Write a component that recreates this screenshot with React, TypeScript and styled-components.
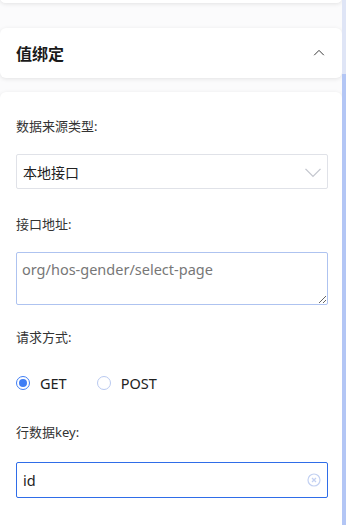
import { FC } from 'react'
import styled, { createGlobalStyle } from 'styled-components'

const GlobalStyle = createGlobalStyle`
  html, body {
    margin: 0;
    padding: 0;
    background: #fbfbfc;
    font-family: 'Noto Sans', 'Noto Sans CJK SC', sans-serif;
    overflow: hidden;
  }
`

const Page = styled.div`
  position: relative;
  display: flex;
  width: 346px;
  height: 525px;
  overflow: hidden;
`

const Panel = styled.div`
  flex: 1;
  display: flex;
  flex-direction: column;
  gap: 14px;
  margin-top: -8px;
  padding-right: 4px;
`

const Card = styled.div`
  background: #fff;
  border-radius: 6px;
  box-shadow: 0 1px 4px rgba(0, 0, 0, 0.1);
`

const TopStub = styled(Card)`
  height: 11px;
  margin-bottom: 11px;
`

const Header = styled(Card)`
  height: 50px;
  display: flex;
  align-items: center;
  justify-content: space-between;
  padding: 0 16px;
`

const Title = styled.h3`
  margin: 0;
  font-size: 16px;
  font-weight: 700;
  color: #1a1a1a;
`

const Form = styled(Card)`
  flex: 1;
  padding: 24px 14px 0 16px;
  border-radius: 6px 6px 0 0;
`

const Field = styled.div<{ $after?: number }>`
  margin-bottom: ${(p) => p.$after ?? 25}px;
`

const Label = styled.div<{ $below?: number }>`
  font-size: 13px;
  color: #333;
  line-height: 20px;
  margin-bottom: ${(p) => p.$below ?? 18}px;
`

const Select = styled.div`
  height: 35px;
  box-sizing: border-box;
  border: 1px solid #e0e2e8;
  border-radius: 2px;
  display: flex;
  align-items: center;
  justify-content: space-between;
  padding: 0 4px 0 6px;
  font-size: 14px;
  color: #222;
`

const TextArea = styled.textarea`
  display: block;
  width: 100%;
  height: 53px;
  box-sizing: border-box;
  border: 1px solid #aec3f0;
  border-radius: 2px;
  padding: 6px 5px;
  font-family: 'Noto Sans', 'Noto Sans CJK SC', sans-serif;
  font-size: 14.5px;
  line-height: 20px;
  color: #777;
  outline: none;
  resize: vertical;
`

const RadioGroup = styled.div`
  display: flex;
  align-items: center;
  gap: 30px;
  height: 20px;
  margin-top: 26px;
  margin-bottom: 29px;
`

const RadioItem = styled.label`
  display: flex;
  align-items: center;
  gap: 10px;
  font-size: 14.5px;
  color: #222;
`

const RadioDot = styled.span<{ checked?: boolean }>`
  width: 14px;
  height: 14px;
  box-sizing: border-box;
  border-radius: 50%;
  border: 1px solid ${(p) => (p.checked ? '#3f7ef5' : '#b9c9f0')};
  display: flex;
  align-items: center;
  justify-content: center;
  &::after {
    content: '';
    width: 8px;
    height: 8px;
    border-radius: 50%;
    background: ${(p) => (p.checked ? '#3f7ef5' : 'transparent')};
  }
`

const InputBox = styled.div`
  height: 36px;
  box-sizing: border-box;
  border: 1px solid #2f6de8;
  border-radius: 2px;
  display: flex;
  align-items: center;
  justify-content: space-between;
  padding: 0 6px 0 6px;
  font-size: 14.5px;
  color: #222;
`

const ScrollTrack = styled.div`
  position: absolute;
  right: 0;
  top: 0;
  bottom: 0;
  width: 4px;
  background: #dfe5f6;
`

const ScrollThumb = styled.div`
  position: absolute;
  right: 0;
  top: 74px;
  bottom: 0;
  width: 4px;
  background: #b3c6f5;
`

const Chevron: FC<{ up?: boolean; color: string; size: number }> = ({ up, color, size }) => (
  <svg width={size} height={size} viewBox="0 0 16 16" fill="none">
    <path
      d={up ? 'M2.5 10.5 L8 5 L13.5 10.5' : 'M2 5.5 L8 11.5 L14 5.5'}
      stroke={color}
      strokeWidth="1.1"
    />
  </svg>
)

const ClearIcon = () => (
  <svg width="14" height="14" viewBox="0 0 14 14" fill="none">
    <circle cx="7" cy="7" r="6" stroke="#c3d1f2" strokeWidth="1.2" />
    <path d="M5 5 L9 9 M9 5 L5 9" stroke="#c3d1f2" strokeWidth="1.3" />
  </svg>
)

const App: FC = () => (
  <>
    <GlobalStyle />
    <Page>
      <Panel>
        <TopStub />
        <Header>
          <Title>值绑定</Title>
          <Chevron up color="#333" size={14} />
        </Header>
        <Form>
          <Field>
            <Label>数据来源类型:</Label>
            <Select>
              <span>本地接口</span>
              <Chevron color="#c4c7cf" size={20} />
            </Select>
          </Field>
          <Field $after={22}>
            <Label>接口地址:</Label>
            <TextArea defaultValue="org/hos-gender/select-page" />
          </Field>
          <Label>请求方式:</Label>
          <RadioGroup>
            <RadioItem>
              <RadioDot checked />
              GET
            </RadioItem>
            <RadioItem>
              <RadioDot />
              POST
            </RadioItem>
          </RadioGroup>
          <Field>
            <Label $below={20}>行数据key:</Label>
            <InputBox>
              <span>id</span>
              <ClearIcon />
            </InputBox>
          </Field>
        </Form>
      </Panel>
      <ScrollTrack />
      <ScrollThumb />
    </Page>
  </>
)

export default App
